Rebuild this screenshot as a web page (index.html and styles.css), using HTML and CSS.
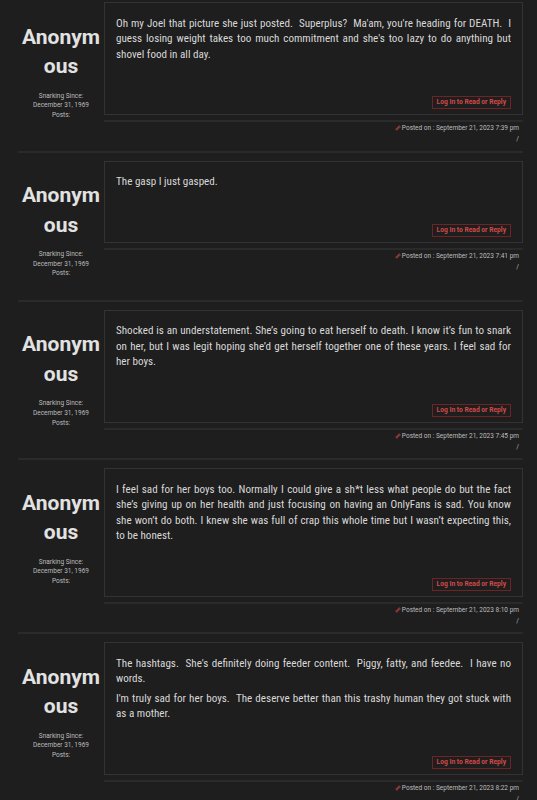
FILE: index.html
```html
<!DOCTYPE html>
<html lang="en">
<head>
  <meta charset="UTF-8">
  <meta name="viewport" content="width=device-width, initial-scale=1">
  <title>Thread - Snark Forum</title>
  <link rel="stylesheet" href="styles.css">
</head>
<body>

  <div class="topic">

    <!-- Post 1 -->
    <div class="post">
      <div class="author">
        <div class="author-name">Anonym ous</div>
        <div class="author-meta">
          Snarking Since:<br>December 31, 1969<br>Posts:
        </div>
      </div>
      <div class="post-main">
        <div class="post-content">
          <p>Oh my Joel that picture she just posted.&nbsp; Superplus?&nbsp; Ma'am, you're heading for DEATH.&nbsp; I guess losing weight takes too much commitment and she's too lazy to do anything but shovel food in all day.</p>
          <div class="post-actions"><a class="reply-btn" href="#">Log In to Read or Reply</a></div>
        </div>
        <div class="post-footer">
          <span class="link-icon"><svg viewBox="0 0 16 16" width="6" height="6"><path d="M6.5 9.5l3-3M5 7.5L3.2 9.3a2.3 2.3 0 0 0 3.3 3.3L8.3 11M11 8.5l1.8-1.8a2.3 2.3 0 0 0-3.3-3.3L7.7 5" fill="none" stroke="currentColor" stroke-width="2.2" stroke-linecap="round"/></svg></span>Posted on : September 21, 2023 7:39 pm<br>/
        </div>
      </div>
    </div>

    <!-- Post 2 -->
    <div class="post">
      <div class="author">
        <div class="author-name">Anonym ous</div>
        <div class="author-meta">
          Snarking Since:<br>December 31, 1969<br>Posts:
        </div>
      </div>
      <div class="post-main">
        <div class="post-content">
          <p>The gasp I just gasped.</p>
          <div class="post-actions"><a class="reply-btn" href="#">Log In to Read or Reply</a></div>
        </div>
        <div class="post-footer">
          <span class="link-icon"><svg viewBox="0 0 16 16" width="6" height="6"><path d="M6.5 9.5l3-3M5 7.5L3.2 9.3a2.3 2.3 0 0 0 3.3 3.3L8.3 11M11 8.5l1.8-1.8a2.3 2.3 0 0 0-3.3-3.3L7.7 5" fill="none" stroke="currentColor" stroke-width="2.2" stroke-linecap="round"/></svg></span>Posted on : September 21, 2023 7:41 pm<br>/
        </div>
      </div>
    </div>

    <!-- Post 3 -->
    <div class="post">
      <div class="author">
        <div class="author-name">Anonym ous</div>
        <div class="author-meta">
          Snarking Since:<br>December 31, 1969<br>Posts:
        </div>
      </div>
      <div class="post-main">
        <div class="post-content">
          <p>Shocked is an understatement. She’s going to eat herself to death. I know it’s fun to snark on her, but I was legit hoping she’d get herself together one of these years. I feel sad for her boys.</p>
          <div class="post-actions"><a class="reply-btn" href="#">Log In to Read or Reply</a></div>
        </div>
        <div class="post-footer">
          <span class="link-icon"><svg viewBox="0 0 16 16" width="6" height="6"><path d="M6.5 9.5l3-3M5 7.5L3.2 9.3a2.3 2.3 0 0 0 3.3 3.3L8.3 11M11 8.5l1.8-1.8a2.3 2.3 0 0 0-3.3-3.3L7.7 5" fill="none" stroke="currentColor" stroke-width="2.2" stroke-linecap="round"/></svg></span>Posted on : September 21, 2023 7:45 pm<br>/
        </div>
      </div>
    </div>

    <!-- Post 4 -->
    <div class="post">
      <div class="author">
        <div class="author-name">Anonym ous</div>
        <div class="author-meta">
          Snarking Since:<br>December 31, 1969<br>Posts:
        </div>
      </div>
      <div class="post-main">
        <div class="post-content">
          <p>I feel sad for her boys too. Normally I could give a sh*t less what people do but the fact she’s giving up on her health and just focusing on having an OnlyFans is sad. You know she won’t do both. I knew she was full of crap this whole time but I wasn’t expecting this, to be honest.</p>
          <div class="post-actions"><a class="reply-btn" href="#">Log In to Read or Reply</a></div>
        </div>
        <div class="post-footer">
          <span class="link-icon"><svg viewBox="0 0 16 16" width="6" height="6"><path d="M6.5 9.5l3-3M5 7.5L3.2 9.3a2.3 2.3 0 0 0 3.3 3.3L8.3 11M11 8.5l1.8-1.8a2.3 2.3 0 0 0-3.3-3.3L7.7 5" fill="none" stroke="currentColor" stroke-width="2.2" stroke-linecap="round"/></svg></span>Posted on : September 21, 2023 8:10 pm<br>/
        </div>
      </div>
    </div>

    <!-- Post 5 -->
    <div class="post">
      <div class="author">
        <div class="author-name">Anonym ous</div>
        <div class="author-meta">
          Snarking Since:<br>December 31, 1969<br>Posts:
        </div>
      </div>
      <div class="post-main">
        <div class="post-content">
          <p>The hashtags.&nbsp; She's definitely doing feeder content.&nbsp; Piggy, fatty, and feedee.&nbsp; I have no words.</p>
          <p>I'm truly sad for her boys.&nbsp; The deserve better than this trashy human they got stuck with as a mother.</p>
          <div class="post-actions"><a class="reply-btn" href="#">Log In to Read or Reply</a></div>
        </div>
        <div class="post-footer">
          <span class="link-icon"><svg viewBox="0 0 16 16" width="6" height="6"><path d="M6.5 9.5l3-3M5 7.5L3.2 9.3a2.3 2.3 0 0 0 3.3 3.3L8.3 11M11 8.5l1.8-1.8a2.3 2.3 0 0 0-3.3-3.3L7.7 5" fill="none" stroke="currentColor" stroke-width="2.2" stroke-linecap="round"/></svg></span>Posted on : September 21, 2023 8:22 pm<br>/
        </div>
      </div>
    </div>

  </div>

</body>
</html>
```

FILE: styles.css
```css
body {
  font-family: Roboto, "Liberation Sans", sans-serif;
  margin: 0;
  background: #1e1e1e;
  color: #d6d6d6;
}

.topic {
  margin: -6px 14px 0 18px;
}

.post {
  display: flex;
  border-bottom: 2px solid #2a2a2a;
  padding-bottom: 5.5px;
}

.author {
  width: 86px;
  flex-shrink: 0;
  text-align: center;
  padding: 28.5px 0 15px;
}

.author-name {
  font-size: 21px;
  font-weight: bold;
  line-height: 29.5px;
  color: #e2e2e2;
  word-break: break-all;
  padding: 0 3px;
}

.author-meta {
  margin-top: 10px;
  font-size: 6.5px;
  line-height: 9.7px;
  color: #bdbdbd;
}

.post-main {
  flex: 1;
  padding-top: 8px;
}

.post-content {
  border: 1px solid #333;
  padding: 12.5px 11px 5px;
}

/* texte du message, plus étroit */
.post-content p {
  margin: 0 0 4px;
  font-family: "Roboto Condensed", Roboto, sans-serif;
  font-size: 11.1px;
  line-height: 15.5px;
  text-align: justify;
  color: #d8d8d8;
}

.post-actions {
  display: flex;
  justify-content: flex-end;
  margin-top: 34px;
}

.reply-btn {
  border: 1px solid #6e2424;
  color: #d24a4a;
  font-size: 6.7px;
  font-weight: bold;
  line-height: 11px;
  padding: 0 4px;
  text-decoration: none;
}

.post-footer {
  margin-top: 5px;
  border-top: 2px solid #2a2a2a;
  padding: 1px 4px 0;
  text-align: right;
  font-size: 6.5px;
  line-height: 11px;
  color: #bdbdbd;
}

.link-icon {
  color: #d24a4a;
  margin-right: 1px;
}

.link-icon svg {
  vertical-align: -1px;
}
```
